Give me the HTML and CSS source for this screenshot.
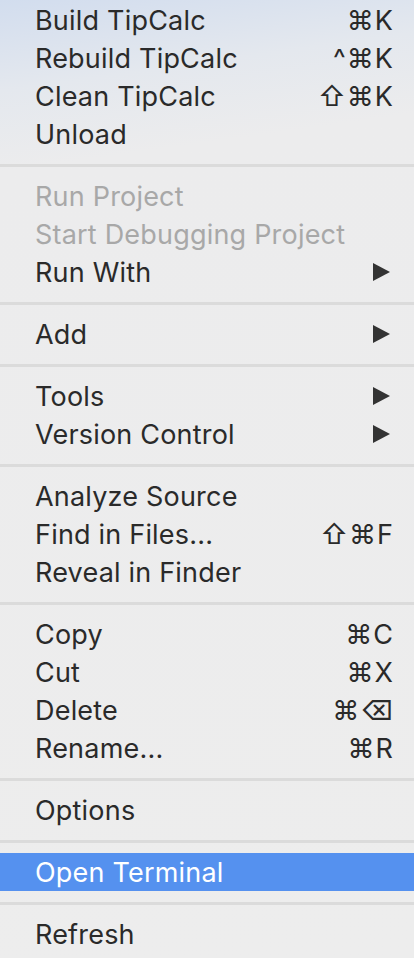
FILE: index.html
```html
<!DOCTYPE html>
<html>
<head>
<meta charset="utf-8">
<link rel="stylesheet" href="styles.css">
</head>
<body>
<div class="menu">
  <div class="item"><span class="label">Build TipCalc</span><span class="key">⌘K</span></div>
  <div class="item"><span class="label">Rebuild TipCalc</span><span class="key">^⌘K</span></div>
  <div class="item"><span class="label">Clean TipCalc</span><span class="key">⇧⌘K</span></div>
  <div class="item"><span class="label">Unload</span></div>
  <div class="sep"></div>
  <div class="item disabled"><span class="label">Run Project</span></div>
  <div class="item disabled"><span class="label">Start Debugging Project</span></div>
  <div class="item"><span class="label">Run With</span><span class="arrow"></span></div>
  <div class="sep"></div>
  <div class="item"><span class="label">Add</span><span class="arrow"></span></div>
  <div class="sep"></div>
  <div class="item"><span class="label">Tools</span><span class="arrow"></span></div>
  <div class="item"><span class="label">Version Control</span><span class="arrow"></span></div>
  <div class="sep"></div>
  <div class="item"><span class="label">Analyze Source</span></div>
  <div class="item"><span class="label">Find in Files...</span><span class="key">⇧⌘F</span></div>
  <div class="item"><span class="label">Reveal in Finder</span></div>
  <div class="sep"></div>
  <div class="item"><span class="label">Copy</span><span class="key">⌘C</span></div>
  <div class="item"><span class="label">Cut</span><span class="key">⌘X</span></div>
  <div class="item"><span class="label">Delete</span><span class="key">⌘⌫</span></div>
  <div class="item"><span class="label">Rename...</span><span class="key">⌘R</span></div>
  <div class="sep"></div>
  <div class="item"><span class="label">Options</span></div>
  <div class="sep"></div>
  <div class="item selected"><span class="label">Open Terminal</span></div>
  <div class="sep"></div>
  <div class="item"><span class="label">Refresh</span></div>
</div>
</body>
</html>
```
FILE: styles.css
```css
html, body {
  margin: 0;
  padding: 0;
  background: #ececec;
}
.menu {
  width: 414px;
  height: 958px;
  box-sizing: border-box;
  padding-top: 1px;
  background: linear-gradient(172deg, #d2ddee 0px, #e4e8ee 90px, #ececed 170px, #ededed 100%);
  font-family: Inter, "DejaVu Sans", sans-serif;
  font-size: 27px;
  letter-spacing: 0.2px;
  color: #2a2a2a;
  display: flex;
  flex-direction: column;
}
.item {
  height: 38px;
  display: flex;
  align-items: center;
  justify-content: space-between;
  padding: 0 20px 0 35px;
}
.label {
  white-space: nowrap;
}
.disabled {
  color: #a8a8a8;
}
.selected {
  background: #5591ef;
  color: #ffffff;
}
.key {
  white-space: nowrap;
  letter-spacing: 1px;
}
.arrow {
  width: 0;
  height: 0;
  border-top: 9.5px solid transparent;
  border-bottom: 9.5px solid transparent;
  border-left: 17px solid #333333;
  margin-right: 4px;
}
.sep {
  height: 24px;
  display: flex;
  align-items: center;
}
.sep::before {
  content: "";
  display: block;
  width: 100%;
  height: 3px;
  background: #dbdbdb;
}
```
